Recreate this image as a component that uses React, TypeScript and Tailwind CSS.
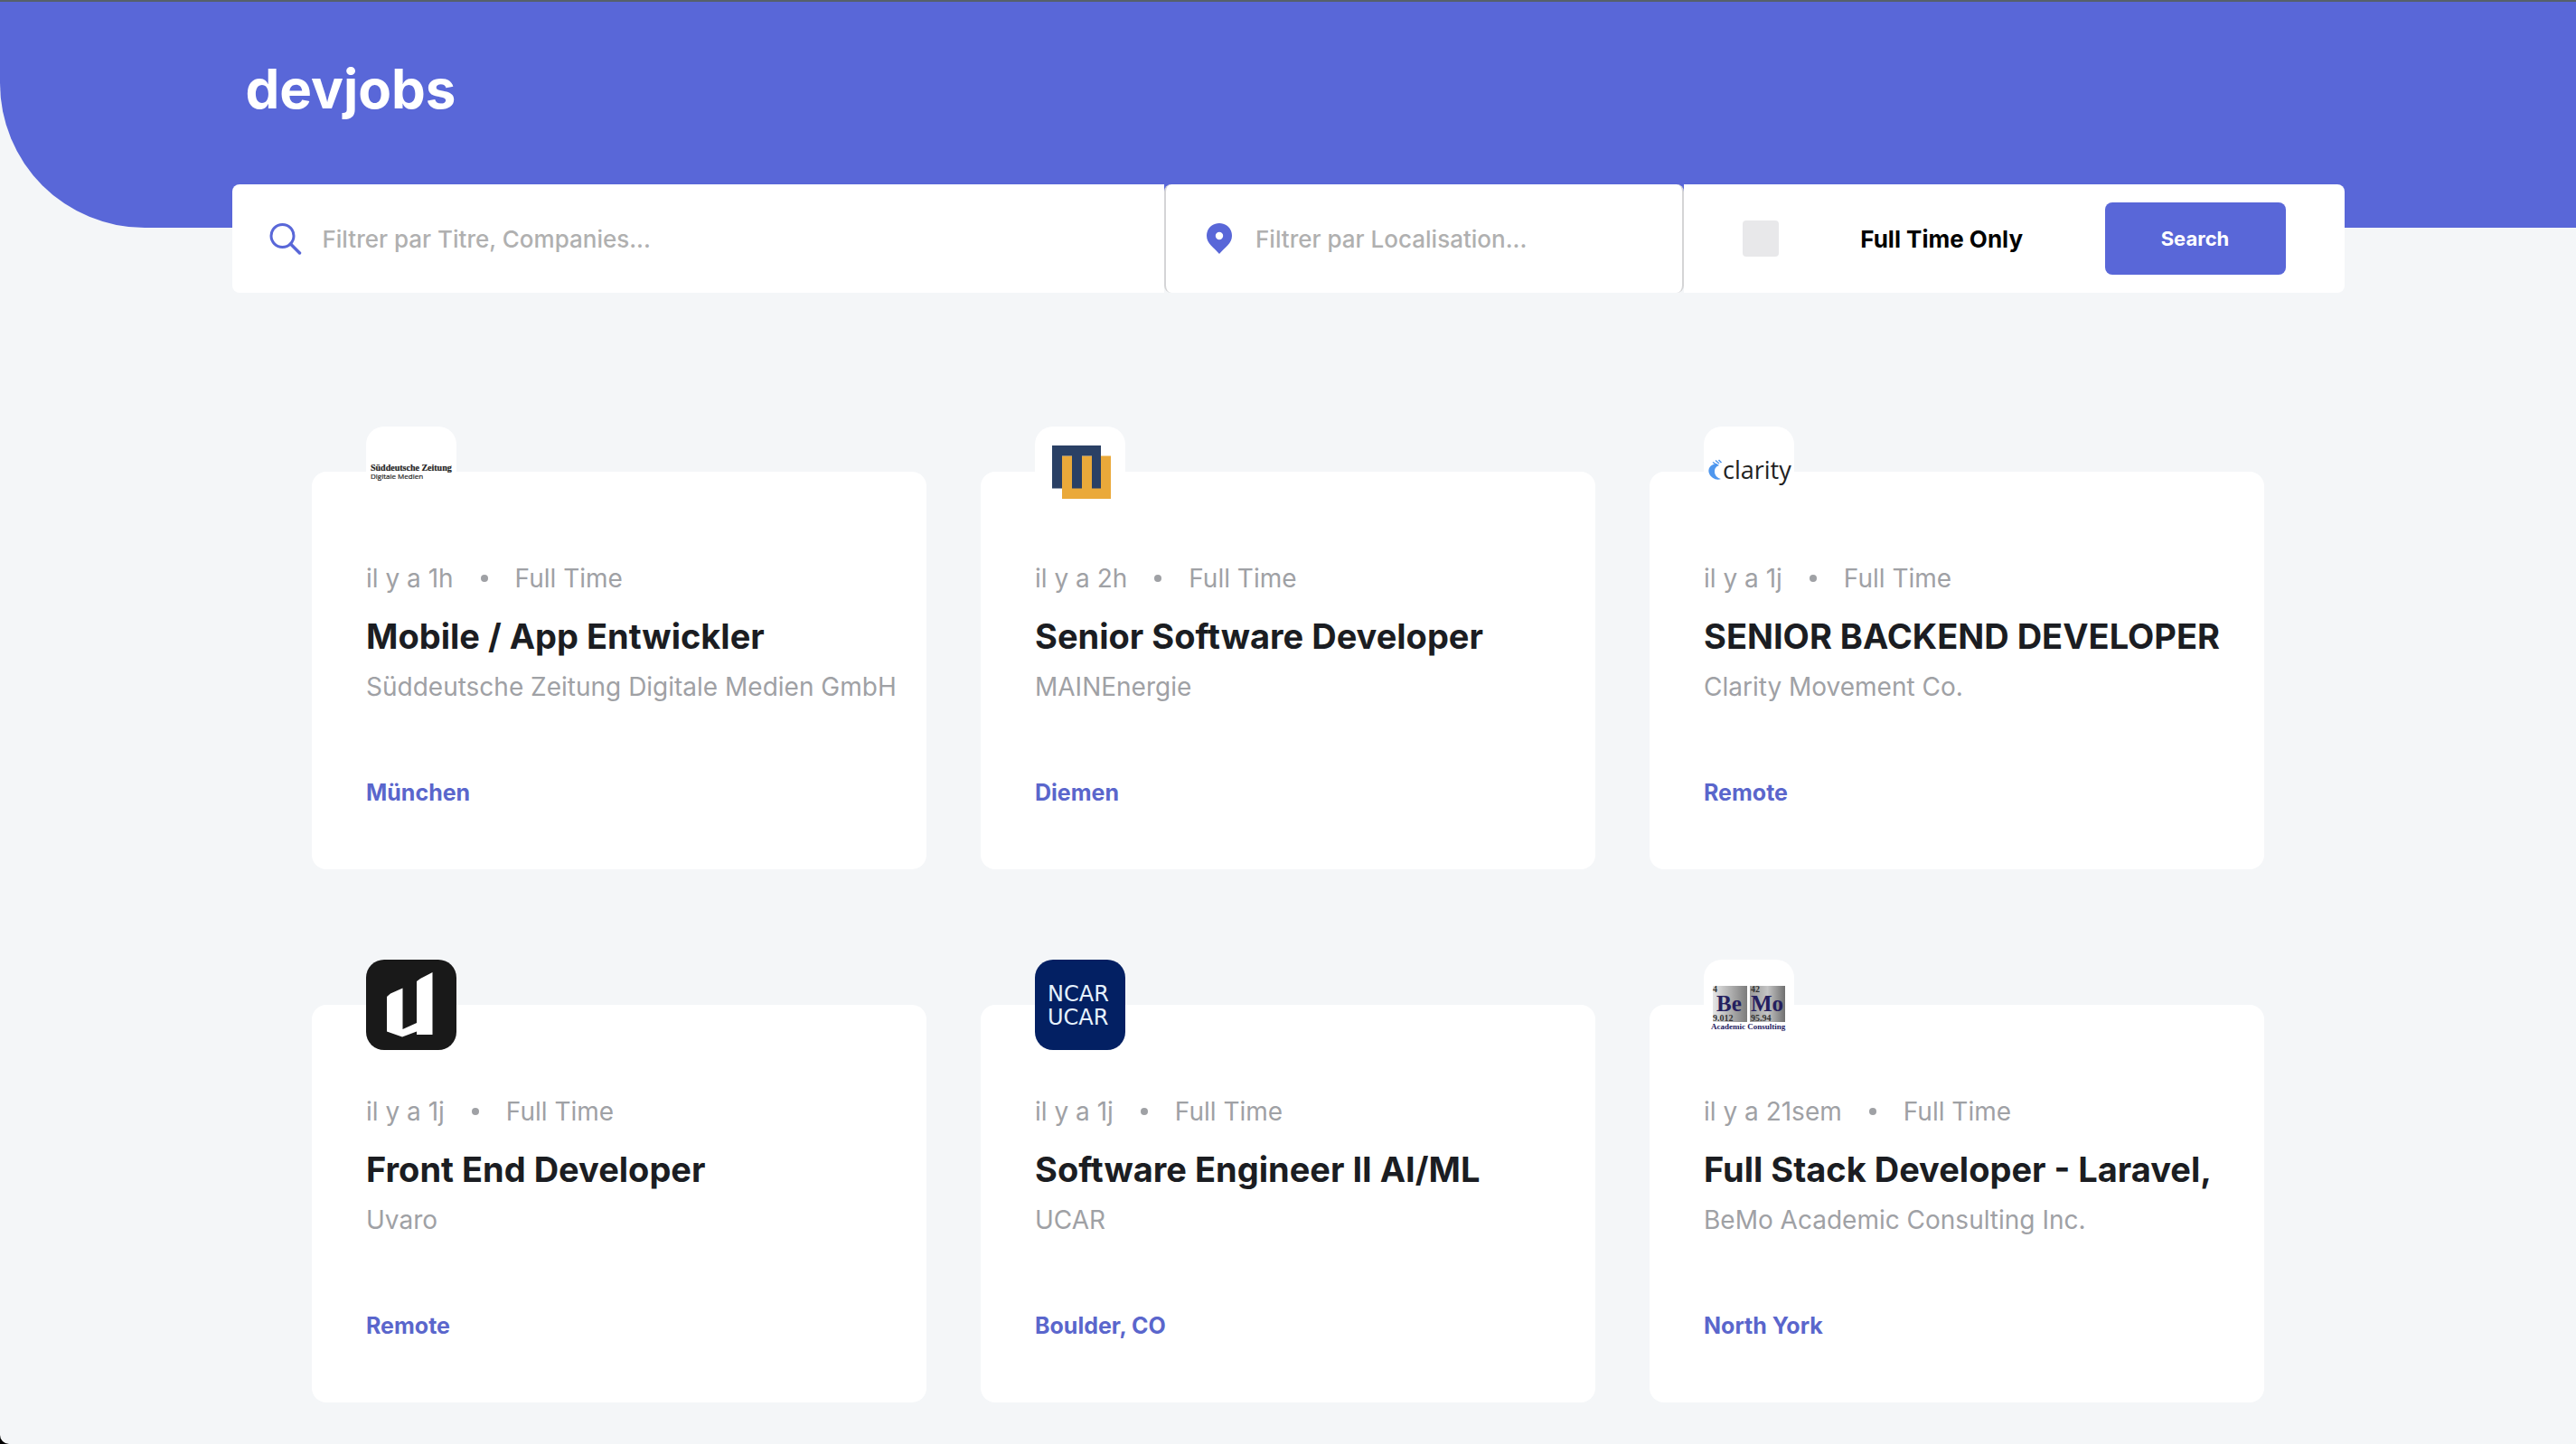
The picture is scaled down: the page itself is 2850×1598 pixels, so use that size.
import type { ReactNode } from "react";

const SuddeutscheLogo = () => (
  <svg viewBox="0 0 100 100" className="size-full bg-white" role="img" aria-label="Süddeutsche Zeitung">
    <text x="5" y="49" fontSize="10" fontWeight="700" fill="#222" stroke="#222" strokeWidth="0.2" fontFamily="Liberation Serif, serif">Süddeutsche Zeitung</text>
    <text x="5" y="58" fontSize="8" fill="#222" stroke="#222" strokeWidth="0.2" fontFamily="Open Sans, sans-serif">Digitale Medien</text>
  </svg>
);

const MainEnergieLogo = () => (
  <svg viewBox="0 0 100 100" className="size-full bg-white" role="img" aria-label="MAINEnergie">
    <path fill="#eaa93a" d="M30 32.500h54V80H30z" />
    <path fill="#2a4065" d="M19 21h54v47.500H63V32.500H52v36H41v-36H30v36H19z" />
  </svg>
);

const ClarityLogo = () => (
  <svg viewBox="0 0 100 100" className="size-full bg-white" role="img" aria-label="Clarity">
    <path fill="#4f97ee" d="M14 41C7 42 4 47 6 52c2 5 8 8 13 6-4-1-7-4-7-8s2-6 5-7z" />
    <path d="M10 39.500l4.500 3M13 37.500l4 3.500M16.500 37l3 3" stroke="#4f97ee" strokeWidth="1.500" fill="none" />
    <text x="21" y="58" fontSize="27" fill="#222" fontFamily="Open Sans, sans-serif">clarity</text>
  </svg>
);

const UvaroLogo = () => (
  <svg viewBox="0 0 100 100" className="size-full bg-[#191919]" role="img" aria-label="Uvaro">
    <path fill="#fff" d="M23 41l4-3.500 13.500-6V77L56 70V24l4-3 13.500-7v69H56v-3.500l-16 6-17-6z" />
  </svg>
);

const UcarLogo = () => (
  <svg viewBox="0 0 100 100" className="size-full bg-[#032063]" role="img" aria-label="NCAR UCAR">
    <g fill="#e6f2ff" fontSize="24" fontFamily="DejaVu Sans, sans-serif">
      <text x="14" y="46">NCAR</text>
      <text x="14" y="72">UCAR</text>
    </g>
  </svg>
);

const BemoLogo = () => (
  <svg viewBox="0 0 100 100" className="size-full bg-white" role="img" aria-label="BeMo Academic Consulting">
    <defs>
      <linearGradient id="bemo-left" x1="0" y1="0" x2="1" y2="0">
        <stop offset="0" stopColor="#e6e6e6" />
        <stop offset="1" stopColor="#7c7c7c" />
      </linearGradient>
      <linearGradient id="bemo-right" x1="0" y1="0" x2="1" y2="0">
        <stop offset="0" stopColor="#999" />
        <stop offset="0.500" stopColor="#c4c4c4" />
        <stop offset="1" stopColor="#707070" />
      </linearGradient>
    </defs>
    <path fill="url(#bemo-left)" d="M10 29h38v40H10z" />
    <path fill="url(#bemo-right)" d="M51 29h39v40H51z" />
    <g fontFamily="Liberation Serif, serif" fontWeight="700">
      <g fill="#333" fontSize="10">
        <text x="10" y="36">4</text>
        <text x="52" y="36">42</text>
        <text x="10" y="68">9.012</text>
        <text x="52" y="68">95.94</text>
      </g>
      <g fill="#25205f">
        <text x="14" y="57" fontSize="25">Be</text>
        <text x="52" y="57" fontSize="25">Mo</text>
        <text x="8" y="77" fontSize="9">Academic Consulting</text>
      </g>
    </g>
  </svg>
);

type Job = {
  logo: ReactNode;
  posted: string;
  title: string;
  company: string;
  location: string;
};

const jobs: Job[] = [
  { logo: <SuddeutscheLogo />, posted: "il y a 1h", title: "Mobile / App Entwickler", company: "Süddeutsche Zeitung Digitale Medien GmbH", location: "München" },
  { logo: <MainEnergieLogo />, posted: "il y a 2h", title: "Senior Software Developer", company: "MAINEnergie", location: "Diemen" },
  { logo: <ClarityLogo />, posted: "il y a 1j", title: "SENIOR BACKEND DEVELOPER", company: "Clarity Movement Co.", location: "Remote" },
  { logo: <UvaroLogo />, posted: "il y a 1j", title: "Front End Developer", company: "Uvaro", location: "Remote" },
  { logo: <UcarLogo />, posted: "il y a 1j", title: "Software Engineer II AI/ML", company: "UCAR", location: "Boulder, CO" },
  { logo: <BemoLogo />, posted: "il y a 21sem", title: "Full Stack Developer - Laravel,", company: "BeMo Academic Consulting Inc.", location: "North York" },
];

const JobCard = ({ job }: { job: Job }) => (
  <li className="rounded-2xl bg-white px-[60px] pb-[69px]">
    <div className="-mt-[50px] mb-[50px] size-[100px] overflow-hidden rounded-[20px]">{job.logo}</div>
    <div className="flex items-center gap-[30px] text-[28px] leading-9 whitespace-nowrap text-[#9fa1a5]">
      <span>{job.posted}</span>
      <span className="size-2 rounded-full bg-[#9fa1a5]" />
      <span>Full Time</span>
    </div>
    <h2 className="mt-[22px] text-[38px] leading-12 font-bold whitespace-nowrap text-[#1b1d22]">
      <a href="#job">{job.title}</a>
    </h2>
    <p className="mt-[14px] text-[28px] leading-9 whitespace-nowrap text-[#9fa1a5]">{job.company}</p>
    <p className="mt-[83px] text-[25px] leading-8 font-bold text-[#5a66cc]">{job.location}</p>
  </li>
);

export default function App() {
  return (
    <div className="bg-black font-['Inter',sans-serif]">
      <div className="min-h-screen rounded-bl-[10px] bg-[#f4f6f8] pb-[46px]">
        <div className="border-t-2 border-[#56606a] bg-[#f4f6f8]">
          <header className="rounded-bl-[160px] bg-[#5967d8] pb-[118px]">
            <h1 className="mx-auto w-[82%] px-[15px] pt-[60px] text-[60px] leading-[72px] font-bold text-white">
              <a href="#home">devjobs</a>
            </h1>
          </header>
        </div>

        <form className="mx-auto -mt-12 grid h-[120px] w-[82%] grid-cols-[1032fr_575fr_731fr]" onSubmit={(e) => e.preventDefault()}>
          <label className="flex items-center gap-[23px] rounded-l-lg bg-white pl-[41px]">
            <svg viewBox="0 0 36 36" className="size-9 shrink-0" fill="none" stroke="#5967d8" aria-hidden="true">
              <circle cx="14.500" cy="15" r="12.500" strokeWidth="3" />
              <path d="M23.500 24l10 10" strokeWidth="3.500" strokeLinecap="round" />
            </svg>
            <input
              type="text"
              aria-label="Titre, Companies"
              placeholder="Filtrer par Titre, Companies..."
              className="min-w-0 flex-1 pt-0.5 text-[26px] leading-8 font-medium text-black outline-none placeholder:text-[#b0b0b0]"
            />
          </label>
          <label className="flex items-center gap-[26px] rounded-lg border-x-2 border-[#d4d4d6] bg-white pl-[45px]">
            <svg viewBox="0 0 28 34" className="h-[34px] w-7 shrink-0" aria-hidden="true">
              <path fill="#5967d8" fillRule="evenodd" d="M14 0C6 0 0 6 0 14c0 8.500 8 13 14 20 6-7 14-11.500 14-20C28 6 22 0 14 0zm0 9.800a4.200 4.200 0 110 8.400 4.200 4.200 0 010-8.400z" />
            </svg>
            <input
              type="text"
              aria-label="Localisation"
              placeholder="Filtrer par Localisation..."
              className="min-w-0 flex-1 pt-0.5 text-[26px] leading-8 font-medium text-black outline-none placeholder:text-[#b0b0b0]"
            />
          </label>
          <div className="flex items-center justify-between rounded-r-lg bg-white pr-[65px] pl-[65px]">
            <input id="full-time" type="checkbox" className="size-10 appearance-none rounded-[4px] bg-[#e8e8ea] checked:bg-[#5967d8]" />
            <label htmlFor="full-time" className="pt-0.5 text-[26px] leading-8 font-bold text-black">
              Full Time Only
            </label>
            <button type="submit" className="h-20 w-[200px] rounded-lg bg-[#5967d8] text-[22px] font-bold text-white">
              Search
            </button>
          </div>
        </form>

        <ul className="mx-auto mt-[198px] grid w-full max-w-[2160px] grid-cols-3 gap-x-[60px] gap-y-[150px]">
          {jobs.map((job) => (
            <JobCard key={job.title} job={job} />
          ))}
        </ul>
      </div>
    </div>
  );
}
